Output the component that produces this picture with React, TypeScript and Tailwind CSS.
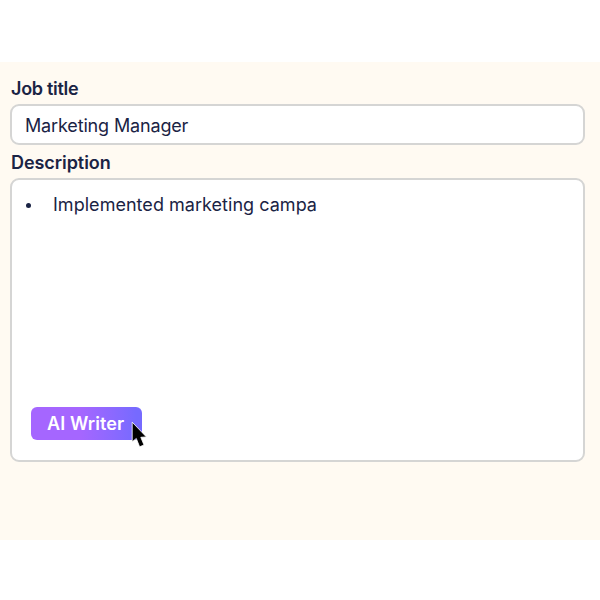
export default function App() {
  return (
    <div className="h-[600px] w-[600px] bg-white pt-[62px] font-['Inter',sans-serif] text-[#1a2344]">
      <main className="flex h-[478px] flex-col bg-[#fffaf2] pr-[15px] pl-[10px]">
        <label className="mt-[15px] ml-px h-[27px] whitespace-nowrap text-[18px] leading-6 font-semibold tracking-[-0.3px]">
          Job title
        </label>
        <div className="flex h-[41px] shrink-0 items-center rounded-[9px] border-2 border-[#d5d5d4] bg-white pt-[2px] pl-[13px] text-[18px] leading-6 whitespace-nowrap">
          <span className="tracking-[-0.15px]">Marketing Manager</span>
        </div>
        <label className="mt-[6px] ml-px h-[27px] whitespace-nowrap text-[18px] leading-6 font-semibold tracking-[-0.06px]">
          Description
        </label>
        <div className="flex h-[284px] shrink-0 flex-col items-start justify-between rounded-[9px] border-2 border-[#d5d5d4] bg-white px-[14px] pt-[13px] pb-5">
          <div className="flex items-center text-[18px] leading-6 whitespace-nowrap">
            <span className="mt-px mr-[22px] size-[5px] rounded-full bg-[#1a2344]" />
            <span className="tracking-[0.03px]">Implemented marketing campa</span>
          </div>
          <button className="relative ml-[5px] flex h-[33px] w-[111px] items-center rounded-[6px] bg-linear-to-r from-[#a566ff] from-45% to-[#766aff] to-95% pl-4 text-[18px] font-semibold whitespace-nowrap text-white">
            <span className="tracking-[0.1px]">AI Writer</span>
            <svg
              className="absolute top-[14px] left-[100px]"
              width="17"
              height="28"
              viewBox="0 0 17 28"
            >
              <path
                d="M1.2 1.2V20.8L5.3 17.5L8.6 25.8L13 24L9.8 16.3L15.4 15.9Z"
                fill="#000"
                stroke="#fff"
                strokeWidth="0.8"
              />
            </svg>
          </button>
        </div>
      </main>
    </div>
  );
}
